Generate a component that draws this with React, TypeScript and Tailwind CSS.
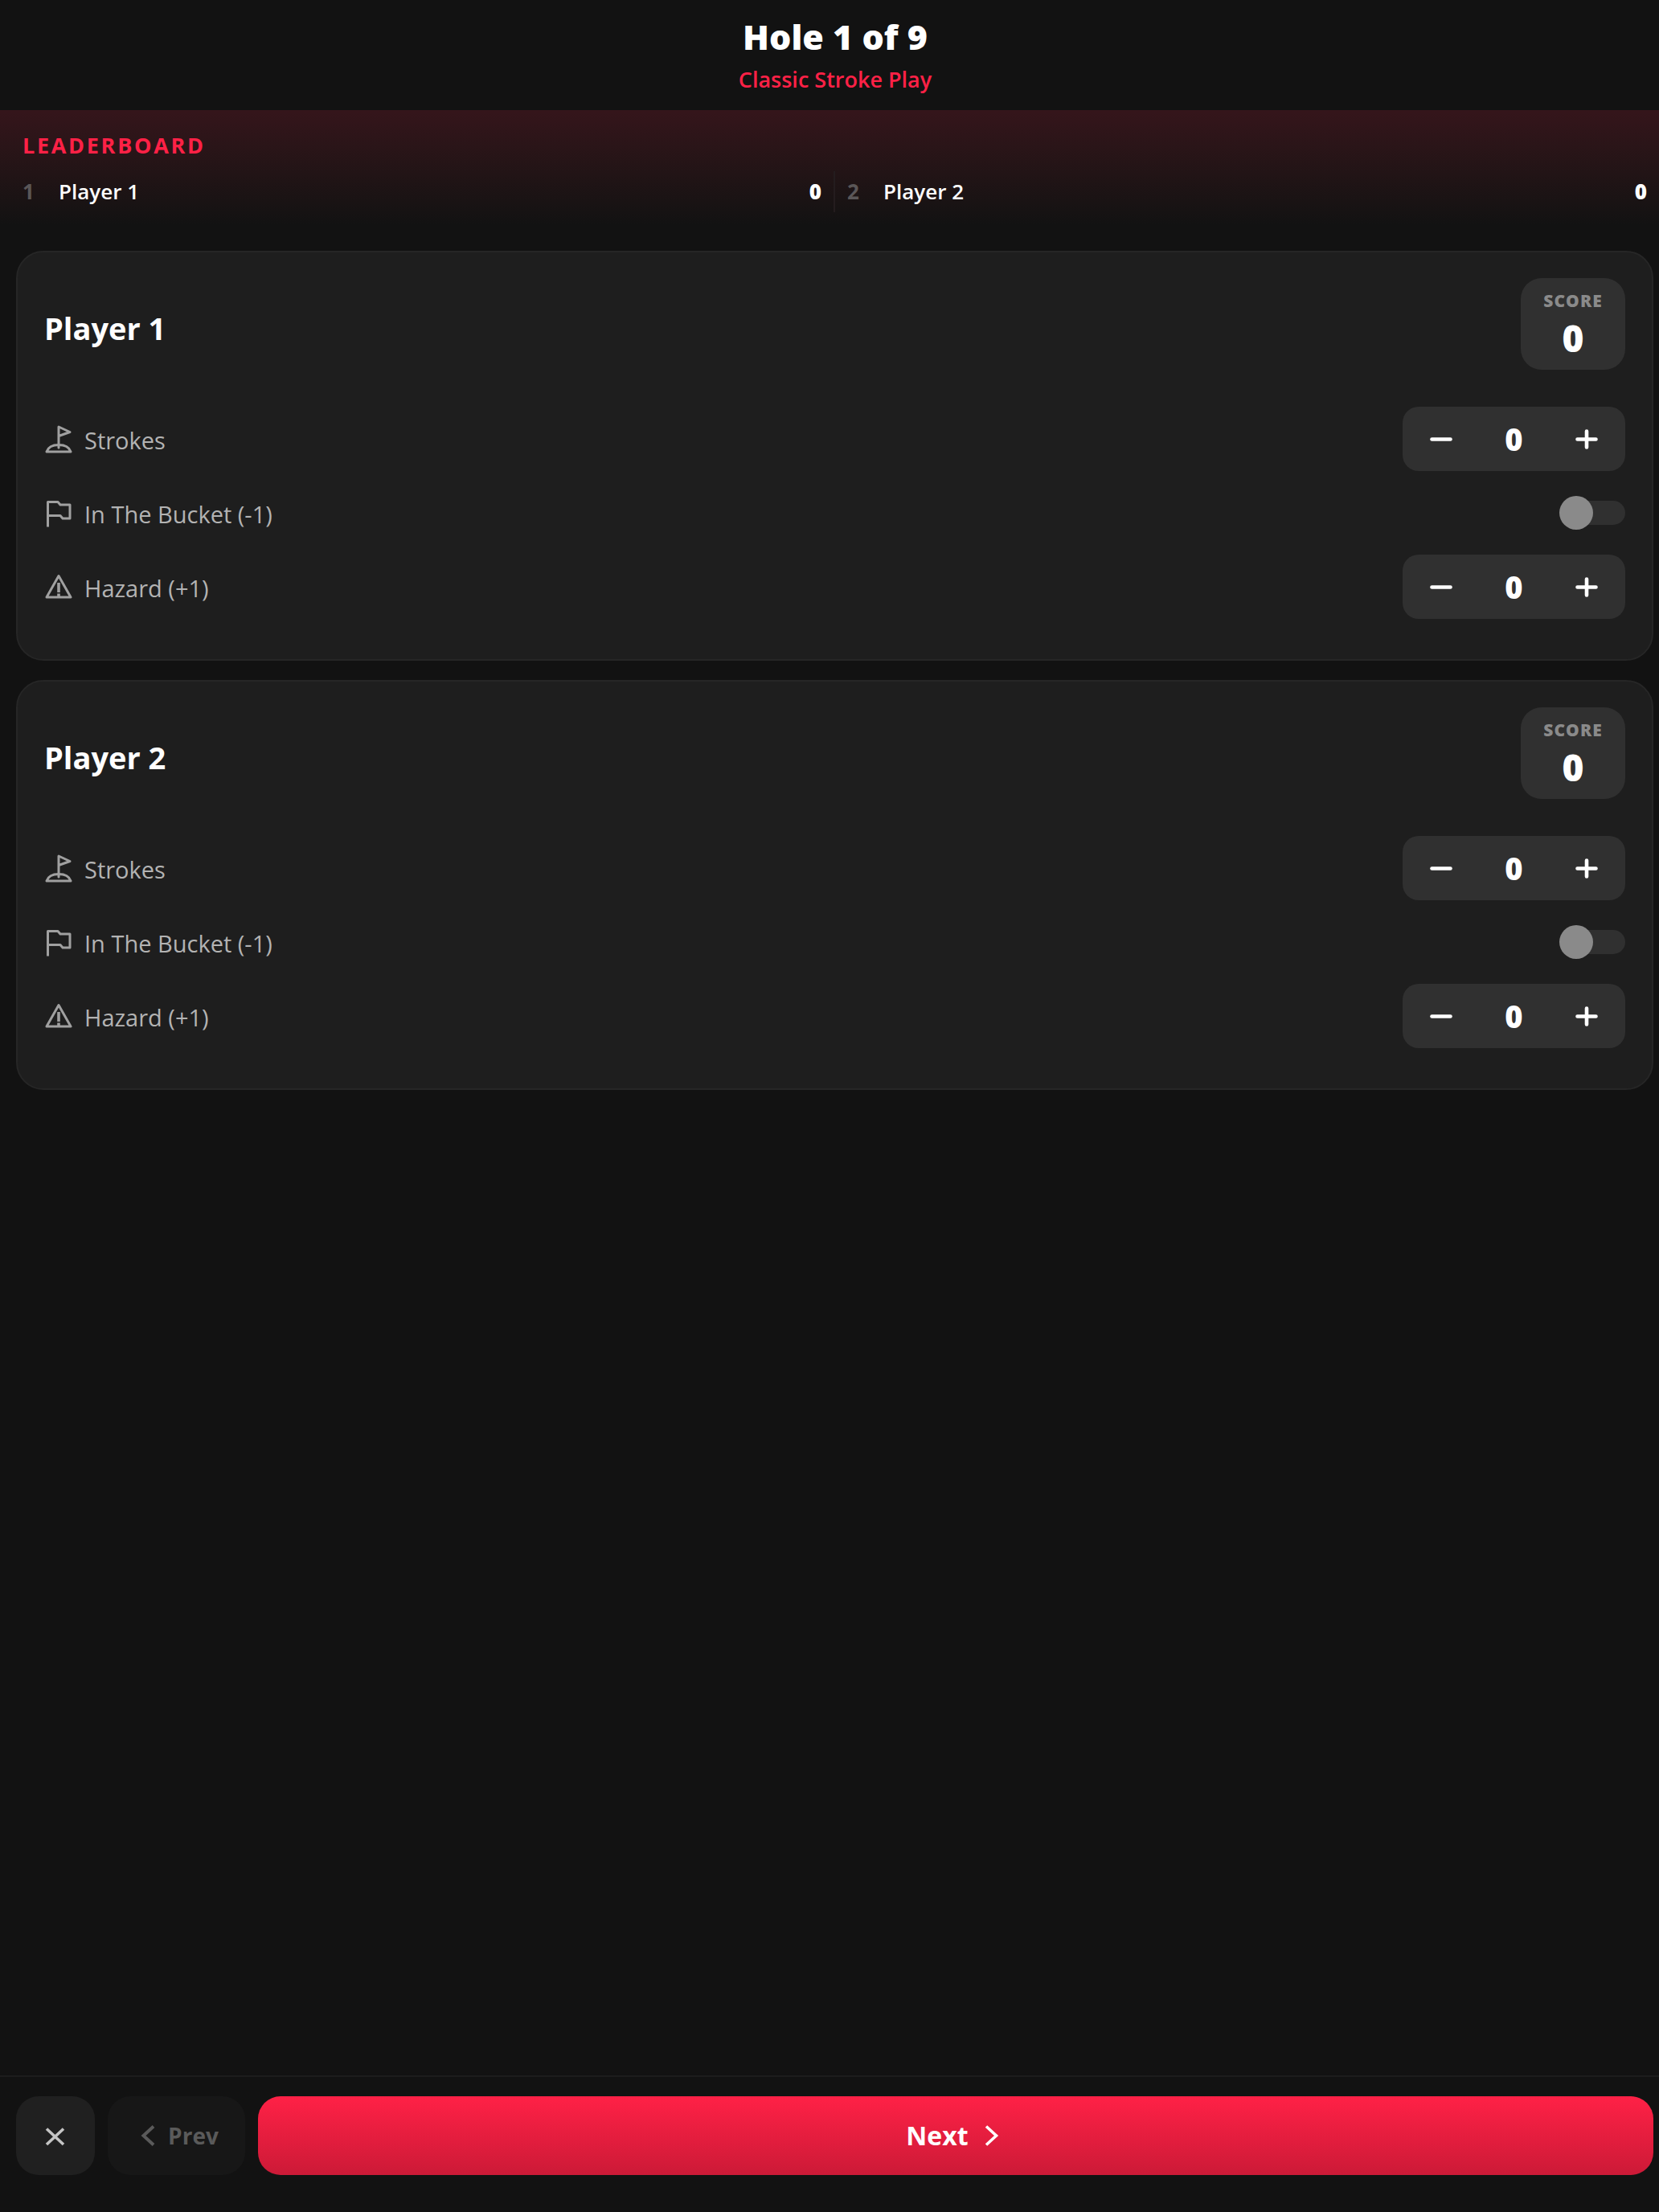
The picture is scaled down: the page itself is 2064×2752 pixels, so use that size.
import React, { useState } from "react";

function GolfIcon() {
  return (
    <svg viewBox="0 0 36 36" className="size-9 shrink-0" fill="none" stroke="currentColor" strokeWidth="3" strokeLinejoin="round" strokeLinecap="round" aria-hidden="true">
      <path d="M18 29V3l14 6.500-14 5" />
      <path d="M3 34h30c-2-6-8-8.500-15-8.500S5 28 3 34z" />
    </svg>
  );
}

function FlagIcon() {
  return (
    <svg viewBox="0 0 36 36" className="size-9 shrink-0" fill="none" stroke="currentColor" strokeWidth="3" strokeLinejoin="round" aria-hidden="true">
      <path d="M4.500 35.500V4.500H17l3 3.500h12v17H23l-3-3.500H4.500" />
    </svg>
  );
}

function HazardIcon() {
  return (
    <svg viewBox="0 0 36 36" className="size-9 shrink-0" fill="none" stroke="currentColor" strokeWidth="3" strokeLinejoin="round" aria-hidden="true">
      <path d="M18 4.500 33 31H3z" />
      <path d="M18 13v12M18 26.500V31" strokeWidth="3.600" />
    </svg>
  );
}

function Stepper({ label, value, onChange }: { label: string; value: number; onChange: (n: number) => void }) {
  return (
    <div role="group" aria-label={label} className="flex h-20 w-[277px] items-center rounded-[20px] bg-[#303030] text-white">
      <button type="button" aria-label={`Decrease ${label}`} onClick={() => onChange(Math.max(0, value - 1))} className="flex h-full w-24 items-center justify-center">
        <svg viewBox="0 0 28 28" className="size-7" stroke="currentColor" strokeWidth="4.600" strokeLinecap="round" aria-hidden="true">
          <path d="M2.500 14.500h23" />
        </svg>
      </button>
      <output className="flex-1 text-center text-[38px] leading-[52px] font-extrabold">{value}</output>
      <button type="button" aria-label={`Increase ${label}`} onClick={() => onChange(value + 1)} className="flex h-full w-24 items-center justify-center">
        <svg viewBox="0 0 28 28" className="size-7" stroke="currentColor" strokeWidth="4.600" strokeLinecap="round" aria-hidden="true">
          <path d="M2.500 14.500h23M14 4.500v20" />
        </svg>
      </button>
    </div>
  );
}

function Row({ icon, label, htmlFor, children }: { icon: React.ReactNode; label: string; htmlFor?: string; children: React.ReactNode }) {
  return (
    <div className="flex h-20 items-center justify-between">
      <div className="flex items-center gap-[14px] text-[#a0a0a0]">
        {icon}
        {htmlFor ? (
          <label htmlFor={htmlFor} className="pt-1 text-[29px] leading-10 font-medium text-[#b3b3b3]">{label}</label>
        ) : (
          <span className="pt-1 text-[29px] leading-10 font-medium text-[#b3b3b3]">{label}</span>
        )}
      </div>
      {children}
    </div>
  );
}

function PlayerCard({ id, name }: { id: number; name: string }) {
  const [strokes, setStrokes] = useState(0);
  const [bucket, setBucket] = useState(false);
  const [hazard, setHazard] = useState(0);
  const score = strokes + hazard - (bucket ? 1 : 0);
  return (
    <section className="rounded-[34px] border-2 border-[#262626] bg-[#1e1e1e] px-[33px] pt-8 pb-[50px]">
      <div className="flex items-start justify-between">
        <h2 className="pt-9 text-[38px] leading-[52px] font-bold text-white">{name}</h2>
        <div className="flex h-[114px] w-[130px] flex-col items-center rounded-[26px] bg-[#303030] pt-[14px]">
          <span className="text-[21px] leading-7 font-extrabold tracking-wider text-[#8a8a8a]">SCORE</span>
          <span className="pt-[6px] text-[46px] leading-[52px] font-extrabold text-white">{score}</span>
        </div>
      </div>
      <div className="flex flex-col gap-3 pt-[46px]">
        <Row icon={<GolfIcon />} label="Strokes">
          <Stepper label="Strokes" value={strokes} onChange={setStrokes} />
        </Row>
        <Row icon={<FlagIcon />} label="In The Bucket (-1)" htmlFor={`bucket-${id}`}>
          <input
            id={`bucket-${id}`}
            type="checkbox"
            role="switch"
            checked={bucket}
            onChange={(e) => setBucket(e.target.checked)}
            className="flex h-[30px] w-20 appearance-none items-center rounded-full bg-[#303030] before:size-[42px] before:-ml-[2px] before:shrink-0 before:rounded-full before:bg-[#8a8a8a] before:content-[''] checked:justify-end checked:bg-[#d01b38]"
          />
        </Row>
        <Row icon={<HazardIcon />} label="Hazard (+1)">
          <Stepper label="Hazard" value={hazard} onChange={setHazard} />
        </Row>
      </div>
    </section>
  );
}

const players = [
  { id: 1, name: "Player 1", total: 0 },
  { id: 2, name: "Player 2", total: 0 },
];

export default function App() {
  return (
    <div className="flex min-h-screen flex-col bg-[#121212] font-['Open_Sans','Noto_Sans',sans-serif] text-white">
      <header className="flex flex-col items-center gap-[9px] pt-5 pb-5 pl-[14px]">
        <h1 className="text-[43px] leading-[52px] font-extrabold">Hole 1 of 9</h1>
        <p className="text-[27px] leading-9 font-semibold text-[#ff2146]">Classic Stroke Play</p>
      </header>

      <section className="bg-gradient-to-b from-[#35151b] to-[#121212] pt-[26px] pb-4 pl-[14px]">
        <h2 className="pl-[14px] text-[27px] leading-9 font-bold tracking-widest text-[#ff2146]">LEADERBOARD</h2>
        <ol className="grid grid-cols-2 pt-[14px] text-[26px] leading-[51px]">
          {players.map((p) => (
            <li key={p.id} className="flex border-r-2 border-[#241c1e] px-[15px] first:pl-[14px] last:border-r-0">
              <span className="w-[45px] font-bold text-[#5a5657]">{p.id}</span>
              <span className="flex-1 font-semibold">{p.name}</span>
              <span className="font-extrabold">{p.total}</span>
            </li>
          ))}
        </ol>
      </section>

      <main className="flex flex-1 flex-col gap-6 pt-8 pr-[7px] pb-8 pl-5">
        {players.map((p) => (
          <PlayerCard key={p.id} id={p.id} name={p.name} />
        ))}
      </main>

      <footer className="flex gap-4 border-t-2 border-[#1c1c1c] pt-6 pr-[7px] pb-[46px] pl-5">
        <button type="button" aria-label="Close" className="flex h-[98px] w-[98px] items-center justify-center rounded-[28px] bg-[#202020] text-[#c4c4c4]">
          <svg viewBox="0 0 28 28" className="size-7" stroke="currentColor" strokeWidth="3.600" aria-hidden="true">
            <path d="M3 5.500l21 19.500M24 5.500l-21 19.500" />
          </svg>
        </button>
        <button type="button" disabled className="flex h-[98px] w-[171px] items-center justify-center gap-4 rounded-[28px] bg-[#171717] pl-2 text-[28px] leading-10 font-bold text-[#5a5a5a]">
          <svg viewBox="0 0 18 28" className="h-7 w-[18px]" fill="none" stroke="currentColor" strokeWidth="4" aria-hidden="true">
            <path d="M16 2.500 3.500 14 16 25.500" />
          </svg>
          Prev
        </button>
        <button type="button" className="flex h-[98px] flex-1 items-center justify-center gap-5 rounded-[28px] bg-gradient-to-b from-[#ff2146] to-[#cc1a37] pr-2 text-[32px] leading-10 font-bold text-white">
          Next
          <svg viewBox="0 0 18 28" className="h-7 w-[18px]" fill="none" stroke="currentColor" strokeWidth="3.600" aria-hidden="true">
            <path d="M2 2.500l12.500 11.500L2 25.500" />
          </svg>
        </button>
      </footer>
    </div>
  );
}
